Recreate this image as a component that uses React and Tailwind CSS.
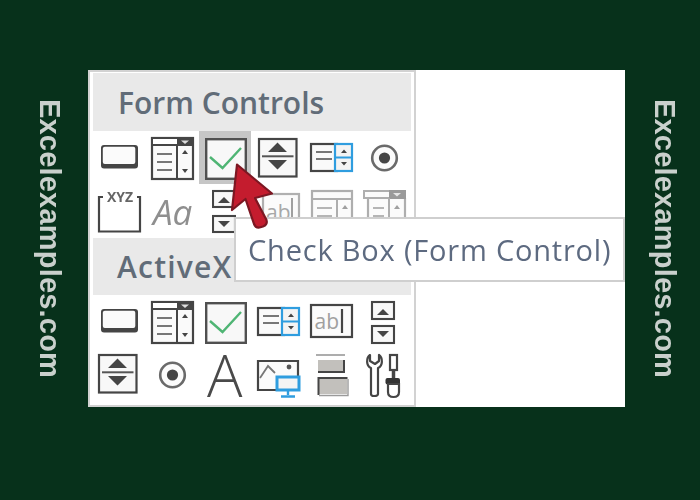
const DK = "#454545";

function Icon({ x, w, top, h, className = "", children }) {
  return (
    <svg width={w} height={h} viewBox={`${x} ${top} ${w} ${h}`} className={`shrink-0 ${className}`}>
      {children}
    </svg>
  );
}

function Btn({ x, y }) {
  return (
    <g transform={`translate(${x} ${y})`}>
      <rect x="0" y="0" width="37" height="23.5" rx="3" fill={DK} />
      <rect x="1.8" y="1.8" width="32.5" height="17.2" rx="2" fill="#fbfbfb" />
    </g>
  );
}

function ListCombo({ x, y }) {
  return (
    <g transform={`translate(${x} ${y})`}>
      <rect x="1" y="1" width="41" height="41" fill="#fafafa" stroke={DK} strokeWidth="2.2" />
      <rect x="1" y="1" width="41" height="7" fill="#fff" stroke={DK} strokeWidth="2" />
      <rect x="26" y="1" width="16" height="7" fill={DK} />
      <path d="M30 3.5h8l-4 3.5z" fill="#ddd" />
      <path d="M26 8v34" stroke={DK} strokeWidth="2" />
      <path d="M6 17h15M6 25h15M6 33h15" stroke="#777" strokeWidth="2" />
      <path d="M31 17h6l-3-4zM31 32h6l-3 4z" fill={DK} />
    </g>
  );
}

function Check({ x, y }) {
  return (
    <g transform={`translate(${x} ${y})`}>
      <rect x="1.2" y="1.2" width="39.6" height="39.6" fill="#f8f8f8" stroke="#505050" strokeWidth="2.4" />
      <path d="M5 19l12.5 11L36 10" fill="none" stroke="#4fb574" strokeWidth="2.4" />
    </g>
  );
}

function Spin({ x, y }) {
  return (
    <g transform={`translate(${x} ${y})`}>
      <rect x="1" y="1" width="37.5" height="37.5" fill="#f8f8f8" stroke={DK} strokeWidth="2.2" />
      <path d="M10 14h19l-9.5-9.5zM10 22h19l-9.5 9.5z" fill={DK} />
      <path d="M4 18.3h31.5" stroke="#555" strokeWidth="2" />
    </g>
  );
}

function ListSpin({ x, y }) {
  return (
    <g transform={`translate(${x} ${y})`}>
      <rect x="1" y="1" width="26" height="27" fill="#fafafa" stroke={DK} strokeWidth="2.2" />
      <path d="M6 9h16M6 16h16" stroke="#777" strokeWidth="2" />
      <rect x="25" y="1" width="17" height="27" fill="#f4f4f4" stroke="#2f9ddf" strokeWidth="2.2" />
      <path d="M25 14.5h17" stroke="#2f9ddf" strokeWidth="2" />
      <path d="M31 10h6l-3-3.5zM31 19h6l-3 3.5z" fill={DK} />
    </g>
  );
}

function Radio({ cx, cy }) {
  return (
    <g>
      <circle cx={cx} cy={cy} r="12.3" fill="#fbfbfb" stroke="#6a6a6a" strokeWidth="2.6" />
      <circle cx={cx} cy={cy} r="5.6" fill={DK} />
    </g>
  );
}

function TwoSpin({ x, y, h, gap }) {
  return (
    <g transform={`translate(${x} ${y})`}>
      <rect x="1" y="1" width="22" height={h - 2} fill="#f8f8f8" stroke={DK} strokeWidth="2.1" />
      <path d={`M6 ${h - 5}h12l-6-6z`} fill={DK} />
      <rect x="1" y={h + gap + 1} width="22" height={h - 2} fill="#f8f8f8" stroke={DK} strokeWidth="2.1" />
      <path d={`M6 ${h + gap + 6}h12l-6 6z`} fill={DK} />
    </g>
  );
}

function Row({ className = "", children }) {
  return <div className={`flex shrink-0 items-start ${className}`}>{children}</div>;
}

function Header({ className = "", children }) {
  return (
    <div className={`flex shrink-0 items-center overflow-hidden whitespace-nowrap bg-[#e9e9e9] font-['Open_Sans',sans-serif] text-[30px] font-semibold text-[#616c78] ${className}`}>
      {children}
    </div>
  );
}

function Side({ className = "" }) {
  return (
    <div className={`flex shrink-0 justify-center pt-[29px] ${className}`}>
      <span className="font-['Liberation_Sans',sans-serif] text-[29px] leading-none font-bold tracking-[0.2px] text-[#c9d0cc] [writing-mode:vertical-rl] blur-[0.4px]">
        Excelexamples.com
      </span>
    </div>
  );
}

function Cursor() {
  return (
    <svg width="50" height="72" viewBox="228 160 50 72" className="absolute top-[90px] left-[140px]">
      <path
        d="M237 164.500L272 193.500L255 198L266.500 220Q268 224.500 263 226.500L259.500 227.500Q255.500 228 254 224L245.500 199L232 210Z"
        fill="#c41c2e"
        stroke="#7c1722"
        strokeWidth="2.2"
        strokeLinejoin="round"
      />
    </svg>
  );
}

export default function App() {
  return (
    <div className="flex h-[500px] w-[700px] items-start overflow-hidden bg-[#07311b] pt-[70px]">
      <Side className="w-[98px]" />
      <div className="relative -ml-[10px] flex h-[337px] w-[537px] shrink-0 bg-white">
        <div className="flex h-full w-[328px] flex-col border-2 border-[#d2d2d2] px-[3px] pt-px blur-[0.5px]">
          <Header className="h-[58px] pl-[25px]">Form Controls</Header>

          <Row className="h-[54px]">
            <Icon x={99} w={41} top={131} h={53} className="ml-[6px]"><Btn x={101} y={145} /></Icon>
            <Icon x={149} w={47} top={131} h={53} className="ml-[9px]"><ListCombo x={151} y={137} /></Icon>
            <Icon x={199} w={52} top={131} h={53} className="ml-[3px] bg-[#c6c6c6]"><Check x={205} y={138} /></Icon>
            <Icon x={256} w={43} top={131} h={53} className="ml-[5px]"><Spin x={258} y={138} /></Icon>
            <Icon x={308} w={47} top={131} h={53} className="ml-[9px]"><ListSpin x={310} y={143} /></Icon>
            <Icon x={369} w={31} top={131} h={53} className="ml-[14px]"><Radio cx={384.5} cy={158} /></Icon>
          </Row>

          <Row className="h-[53px]">
            <Icon x={96} w={47} top={185} h={53} className="ml-[3px]">
              <path d="M103 197H99V231.500H140V197H137" fill="none" stroke={DK} strokeWidth="2.2" />
              <text x="120" y="201.500" textAnchor="middle" fontFamily="Open Sans" fontWeight="700" fontSize="14" fill="#666">XYZ</text>
            </Icon>
            <Icon x={151} w={45} top={185} h={53} className="ml-[8px]">
              <text x="153" y="225" fontFamily="Open Sans" fontStyle="italic" fontSize="35" fill="#8f8f8f">Aa</text>
            </Icon>
            <Icon x={212} w={24} top={185} h={53} className="ml-[16px]"><TwoSpin x={212} y={190} h={18} gap={7} /></Icon>
            <Icon x={258} w={44} top={185} h={53} className="ml-[22px]">
              <rect x="263" y="194" width="36" height="33" fill="#fbfbfb" stroke="#b0b0b0" strokeWidth="2.2" />
              <text x="266" y="220" fontFamily="Open Sans" fontSize="21" fill="#a8a8a8">ab</text>
              <path d="M292 198v24" stroke="#a0a0a0" strokeWidth="2" />
            </Icon>
            <Icon x={309} w={46} top={185} h={53} className="ml-[7px]">
              <rect x="312" y="191" width="40" height="40" fill="#fbfbfb" stroke="#aeaeae" strokeWidth="2.2" />
              <path d="M312 199h40M337 199v32" stroke="#aeaeae" strokeWidth="2" />
              <path d="M317 208h15M317 216h15" stroke="#b5b5b5" strokeWidth="2" />
              <path d="M342 209h6l-3-4z" fill="#a0a0a0" />
            </Icon>
            <Icon x={361} w={47} top={185} h={53} className="ml-[6px]">
              <path d="M368 198v32h37V198" fill="#fbfbfb" stroke="#aeaeae" strokeWidth="2.2" />
              <rect x="364" y="191" width="41" height="7" fill="#fbfbfb" stroke="#aeaeae" strokeWidth="2" />
              <rect x="389" y="190" width="17" height="9" fill="#9a9a9a" />
              <path d="M393 193h8l-4 3.500z" fill="#e5e5e5" />
              <path d="M389 198v32" stroke="#aeaeae" strokeWidth="2" />
              <path d="M373 208h11M373 216h11" stroke="#b5b5b5" strokeWidth="2" />
              <path d="M394 209h6l-3-4z" fill="#a0a0a0" />
            </Icon>
          </Row>

          <Header className="h-[57px] pl-[24px] tracking-[1.2px]">ActiveX Controls</Header>

          <Row className="h-[54px]">
            <Icon x={99} w={41} top={295} h={54} className="ml-[6px]"><Btn x={101} y={309} /></Icon>
            <Icon x={149} w={47} top={295} h={54} className="ml-[9px]"><ListCombo x={151} y={301} /></Icon>
            <Icon x={203} w={46} top={295} h={54} className="ml-[7px]"><Check x={205} y={302} /></Icon>
            <Icon x={255} w={46} top={295} h={54} className="ml-[6px]"><ListSpin x={257} y={307} /></Icon>
            <Icon x={308} w={47} top={295} h={54} className="ml-[7px]">
              <rect x="311" y="305" width="41" height="32" fill="#fbfbfb" stroke={DK} strokeWidth="2.2" />
              <text x="314.500" y="329" fontFamily="Open Sans" fontSize="21" fill="#a0a0a0">ab</text>
              <path d="M342 309v24" stroke={DK} strokeWidth="2.2" />
            </Icon>
            <Icon x={369} w={28} top={295} h={54} className="ml-[14px]"><TwoSpin x={371} y={301} h={19} gap={5} /></Icon>
          </Row>

          <Row className="h-[51px]">
            <Icon x={96} w={44} top={349} h={51} className="ml-[3px]"><Spin x={98} y={354} /></Icon>
            <Icon x={157} w={31} top={349} h={51} className="ml-[17px]"><Radio cx={172.5} cy={375} /></Icon>
            <Icon x={204} w={42} top={349} h={51} className="ml-[16px] overflow-visible">
              <text x="207" y="397" fontFamily="Open Sans" fontWeight="300" fontSize="59" fill="#4a4a4a">A</text>
            </Icon>
            <Icon x={255} w={47} top={349} h={51} className="ml-[9px]">
              <path d="M276 390H258V361H298V376" fill="#fbfbfb" stroke={DK} strokeWidth="2.2" />
              <path d="M260 378l8-12 7 7" fill="none" stroke="#777" strokeWidth="1.8" />
              <circle cx="289" cy="367" r="2.4" fill="#555" />
              <rect x="277" y="377" width="22" height="13" fill="#f4f4f4" stroke="#2f9ddf" strokeWidth="3" />
              <path d="M288 391v4M281 396.500h14" stroke="#2f9ddf" strokeWidth="2.4" />
            </Icon>
            <Icon x={314} w={36} top={349} h={51} className="ml-[12px]">
              <path d="M316 355h29" stroke="#8a8a8a" strokeWidth="1.4" />
              <rect x="318" y="360" width="26" height="11" fill="#c2c0bc" />
              <path d="M344 360v12h-26" fill="none" stroke={DK} strokeWidth="2" />
              <rect x="319" y="379" width="28" height="15" fill="#c2c0bc" />
              <path d="M318.500 395v-17h29" fill="none" stroke={DK} strokeWidth="2" />
              <path d="M319 395.500h29V379" fill="none" stroke="#9a9a9a" strokeWidth="1.4" />
            </Icon>
            <Icon x={364} w={38} top={349} h={51} className="ml-[14px]">
              <path d="M370 355C366 358 366 366 371 368V394Q371 396 374 396Q378 396 378 394V368C383 366 383 358 379 355V361L375 364L370 361Z" fill="#fff" stroke={DK} strokeWidth="2.2" strokeLinejoin="round" />
              <rect x="390" y="355" width="7" height="15" fill="#fff" stroke={DK} strokeWidth="2.2" />
              <path d="M393.500 370v8" stroke={DK} strokeWidth="3.5" />
              <rect x="385.500" y="378" width="14.500" height="6.500" rx="2" fill="#333" />
              <path d="M388 384h11v8q0 5-5.500 5t-5.500-5z" fill="#fff" stroke={DK} strokeWidth="2.2" />
            </Icon>
          </Row>
        </div>

        <div className="flex-1" />

        <div className="absolute top-[147px] left-[146px] flex h-[65px] w-[391px] items-center border-2 border-[#cfcfcf] bg-white pl-[12px] font-['Open_Sans',sans-serif] text-[29px] tracking-[0.8px] whitespace-nowrap text-[#5d6a80] blur-[0.4px]">
          Check Box (Form Control)
        </div>

        <Cursor />
      </div>
      <Side className="w-[75px] pl-[3px]" />
    </div>
  );
}
